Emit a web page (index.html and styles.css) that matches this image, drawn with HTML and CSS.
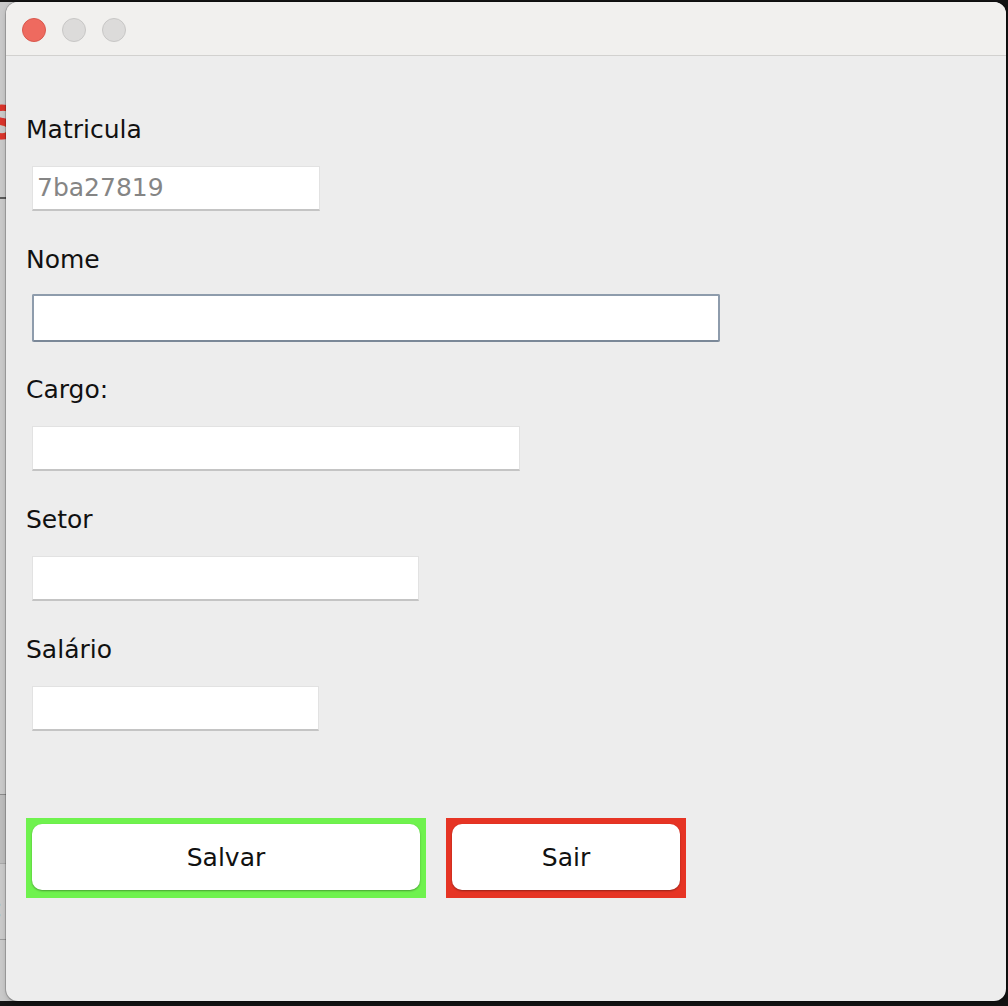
FILE: index.html
```html
<!DOCTYPE html>
<html lang="pt">
<head>
<meta charset="utf-8">
<title>Cadastro</title>
<link rel="stylesheet" href="styles.css">
</head>
<body>
<div class="desktop">
  <div class="behind">
    <span class="behind-s">S</span>
    <div class="behind-line l1"></div>
    <div class="behind-band"></div>
    <span class="behind-c">c</span>
    <div class="behind-line l2"></div>
  </div>
  <div class="window">
    <div class="titlebar">
      <span class="light close"></span>
      <span class="light"></span>
      <span class="light"></span>
    </div>
    <div class="content">
      <div class="group">
        <div class="label">Matricula</div>
        <div class="field w-mat"><span class="value">7ba27819</span></div>
      </div>
      <div class="group">
        <div class="label">Nome</div>
        <div class="field focused w-nome"></div>
      </div>
      <div class="group">
        <div class="label">Cargo:</div>
        <div class="field w-cargo"></div>
      </div>
      <div class="group">
        <div class="label">Setor</div>
        <div class="field w-setor"></div>
      </div>
      <div class="group">
        <div class="label">Salário</div>
        <div class="field w-sal"></div>
      </div>
      <div class="buttons">
        <div class="btn-wrap green w-salvar"><div class="btn">Salvar</div></div>
        <div class="btn-wrap red w-sair"><div class="btn">Sair</div></div>
      </div>
    </div>
  </div>
</div>
</body>
</html>
```

FILE: styles.css
```css
html, body {
  margin: 0;
  padding: 0;
}
body {
  width: 1008px;
  height: 1006px;
  overflow: hidden;
  background: #141414;
  font-family: "DejaVu Sans", "Liberation Sans", sans-serif;
}
.desktop {
  position: relative;
  width: 1008px;
  height: 1006px;
}
.behind {
  position: absolute;
  left: 0;
  top: 2px;
  width: 60px;
  height: 999px;
  background: #c9c9c9;
  overflow: hidden;
}
.behind-s {
  position: absolute;
  left: -14px;
  top: 96px;
  font-size: 46px;
  font-weight: bold;
  color: #d9342b;
  line-height: 50px;
}
.behind-line {
  position: absolute;
  left: 0;
  width: 60px;
  height: 2px;
}
.behind-line.l1 { top: 195px; background: #5a5a5a; }
.behind-line.l2 { top: 937px; height: 1px; background: #9a9a9a; }
.behind-band {
  position: absolute;
  left: 0;
  top: 792px;
  width: 60px;
  height: 68px;
  background: #bcbcbc;
  border-top: 1px solid #8a8a8a;
  border-bottom: 1px solid #a8a8a8;
}
.behind-c {
  position: absolute;
  left: -12px;
  top: 893px;
  font-size: 24px;
  color: #111;
  line-height: 28px;
}
.window {
  position: absolute;
  left: 6px;
  top: 2px;
  width: 1000px;
  height: 999px;
  border-radius: 12px;
  overflow: hidden;
  background: #ededed;
  box-shadow: 0 0 0 1px rgba(0, 0, 0, 0.18), 2px 2px 6px rgba(0, 0, 0, 0.35);
}
.titlebar {
  height: 54px;
  box-sizing: border-box;
  padding: 16px 0 0 16px;
  display: flex;
  gap: 16px;
  background: #f1f0ee;
  border-bottom: 1px solid #d2d1cf;
}
.light {
  width: 24px;
  height: 24px;
  box-sizing: border-box;
  border-radius: 50%;
  background: #dcdbda;
  border: 1px solid #c8c7c6;
}
.light.close {
  background: #ee6a5f;
  border-color: #d9584d;
}
.content {
  padding: 60px 0 0 20px;
}
.group {
  margin-bottom: 35px;
}
.label {
  height: 28px;
  line-height: 28px;
  font-size: 25px;
  color: #111;
}
.field {
  margin: 22px 0 0 6px;
  height: 45px;
  box-sizing: border-box;
  background: #fff;
  border: 1px solid #e2e2e2;
  border-bottom: 2px solid #c4c4c4;
  display: flex;
  align-items: center;
}
.field.focused {
  margin-top: 20px;
  height: 48px;
  border: 2px solid #8e9cac;
  border-bottom-color: #7b8898;
  border-radius: 2px;
}
.group:has(.focused) {
  margin-bottom: 34px;
}
.value {
  padding-left: 4px;
  font-size: 25px;
  color: #858585;
  line-height: 28px;
}
.w-mat { width: 288px; }
.w-nome { width: 688px; }
.w-cargo { width: 488px; }
.w-setor { width: 387px; }
.w-sal { width: 287px; }
.buttons {
  margin-top: 87px;
  display: flex;
  gap: 20px;
}
.btn-wrap {
  height: 80px;
  box-sizing: border-box;
  padding: 6px 6px 8px 6px;
}
.btn-wrap.green { background: #6ff24e; }
.btn-wrap.red { background: #e63424; }
.w-salvar { width: 400px; }
.w-sair { width: 240px; }
.btn {
  height: 66px;
  background: #fff;
  border-radius: 10px;
  box-shadow: 0 1px 2px rgba(0, 0, 0, 0.35);
  display: flex;
  align-items: center;
  justify-content: center;
  font-size: 25px;
  color: #111;
}
```
